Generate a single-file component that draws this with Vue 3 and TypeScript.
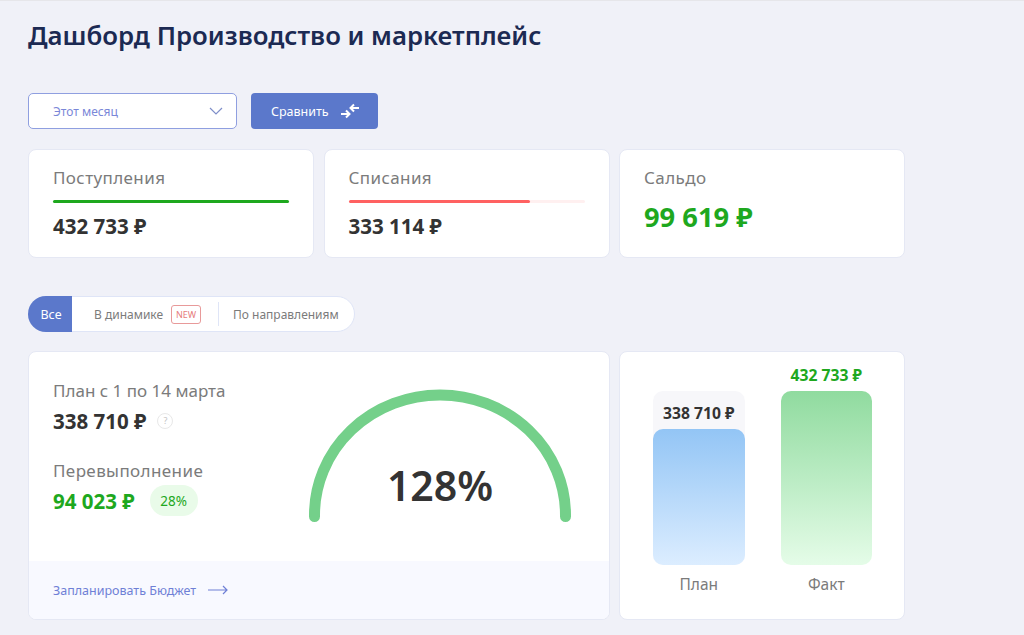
<script setup lang="ts">
const stats = [
  { label: 'Поступления', value: '432 733 ₽', fill: 100, kind: 'in' },
  { label: 'Списания', value: '333 114 ₽', fill: 77, kind: 'out' },
]
</script>

<template>
  <div class="page">
    <h1 class="title">Дашборд Производство и маркетплейс</h1>

    <div class="filters">
      <div class="select">
        <span>Этот месяц</span>
        <svg width="14" height="8" viewBox="0 0 14 8" fill="none">
          <path d="M1 1l6 6 6-6" stroke="#7f8fc9" stroke-width="1.2" />
        </svg>
      </div>
      <button class="compare">
        Сравнить
        <svg width="20" height="16" viewBox="0 0 20 16" fill="none" stroke="#fff" stroke-width="2">
          <path d="M1 11h8M6 7.500L9.500 11 6 14.500" />
          <path d="M19 5h-8M14 1.500L10.500 5 14 8.500" />
        </svg>
      </button>
    </div>

    <div class="grid">
      <div v-for="s in stats" :key="s.label" class="card stat">
        <div class="label wide">{{ s.label }}</div>
        <div class="track" :class="s.kind">
          <div class="fill" :style="{ width: s.fill + '%' }"></div>
        </div>
        <div class="value">{{ s.value }}</div>
      </div>
      <div class="card stat">
        <div class="label wide">Сальдо</div>
        <div class="saldo">99 619 ₽</div>
      </div>
    </div>

    <div class="tabs">
      <div class="tab active">Все</div>
      <div class="tab dyn">В динамике <span class="new">NEW</span></div>
      <div class="tab dir">По направлениям</div>
    </div>

    <div class="grid">
      <div class="card plan">
        <div class="plan-body">
          <div class="plan-text">
            <div class="label">План с 1 по 14 марта</div>
            <div class="value row">338 710 ₽ <span class="hint">?</span></div>
            <div class="label wide over">Перевыполнение</div>
            <div class="value row green">94 023 ₽ <span class="pill">28%</span></div>
          </div>
          <div class="gauge">
            <svg width="264" height="134" viewBox="0 0 264 134" fill="none">
              <path d="M6.500 127.500V126A125.500 120 0 0 1 257.500 126V127.500" stroke="#74d08a" stroke-width="11" stroke-linecap="round" />
            </svg>
            <div class="percent">128%</div>
          </div>
        </div>
        <div class="plan-foot">
          Запланировать Бюджет
          <svg width="20" height="10" viewBox="0 0 20 10" fill="none" stroke="#6f80d6" stroke-width="1.2">
            <path d="M0 5h19M15 1l4 4-4 4" />
          </svg>
        </div>
      </div>

      <div class="card bars">
        <div class="bar-col">
          <div class="bar-top"></div>
          <div class="bar-track">
            <div class="bar-value">338 710 ₽</div>
            <div class="bar blue"></div>
          </div>
          <div class="bar-name">План</div>
        </div>
        <div class="bar-col">
          <div class="bar-top green">432 733 ₽</div>
          <div class="bar greenbar"></div>
          <div class="bar-name">Факт</div>
        </div>
      </div>
    </div>
  </div>
</template>

<style scoped>
.page {
  box-sizing: border-box;
  width: 1024px;
  height: 635px;
  overflow: hidden;
  padding: 0 0 0 28px;
  background: #f0f1f8;
  border-top: 1px solid #e6e6ea;
  font-family: "Noto Sans", "Liberation Sans", sans-serif;
  color: #333;
}
.title {
  margin: 0;
  padding-top: 16px;
  height: 75px;
  box-sizing: border-box;
  font-size: 25.750px;
  line-height: 36px;
  font-weight: 600;
  color: #1c2a53;
}
.filters {
  display: flex;
  gap: 14px;
  margin-top: 17px;
  height: 36px;
}
.select {
  box-sizing: border-box;
  width: 209px;
  display: flex;
  align-items: center;
  justify-content: space-between;
  padding: 0 13px 0 24px;
  background: #fff;
  border: 1px solid #8f9fe0;
  border-radius: 5px;
  font-size: 12px;
  color: #7a87d8;
}
.compare {
  width: 127px;
  display: flex;
  align-items: center;
  gap: 11px;
  padding: 0 0 0 20px;
  border: 0;
  border-radius: 4px;
  background: #5b78cb;
  color: #fff;
  font: inherit;
  font-size: 12.500px;
}
.grid {
  display: grid;
  grid-template-columns: 286px 286px 286px;
  column-gap: 9.500px;
  margin-top: 20px;
}
.card {
  box-sizing: border-box;
  background: #fff;
  border: 1px solid #e5e8f4;
  border-radius: 8px;
}
.stat {
  height: 109px;
  padding: 16px 24px 0;
}
.label {
  font-size: 17px;
  line-height: 24px;
  color: #7b7b7b;
}
.wide {
  letter-spacing: 0.4px;
}
.track {
  height: 3px;
  margin-top: 10px;
  border-radius: 2px;
}
.track.in { background: #e9fbe9; }
.track.in .fill { background: #1ea81e; }
.track.out { background: #fff0f0; }
.track.out .fill { background: #ff6161; }
.fill {
  height: 100%;
  border-radius: 2px;
}
.value {
  margin-top: 11px;
  font-size: 20.500px;
  line-height: 24px;
  font-weight: 700;
  color: #333;
}
.saldo {
  margin-top: 10px;
  font-size: 27.300px;
  line-height: 34px;
  font-weight: 700;
  color: #1ea81e;
}
.tabs {
  box-sizing: border-box;
  align-items: center;
  width: 327px;
  height: 36px;
  margin-top: 38px;
  display: flex;
  background: #fff;
  border: 1px solid #dfe5f7;
  border-radius: 18px;
  font-size: 12px;
  color: #7b7b7b;
}
.tab {
  display: flex;
  align-items: center;
  height: 100%;
}
.active {
  flex: none;
  width: 44px;
  height: 36px;
  margin-left: -1px;
  padding-left: 2px;
  box-sizing: border-box;
  justify-content: center;
  background: #5b78cb;
  border-radius: 18px 0 0 18px;
  color: #fff;
  font-size: 12.500px;
}
.dyn {
  gap: 8px;
  padding-left: 22px;
  width: 146px;
  box-sizing: border-box;
}
.new {
  box-sizing: border-box;
  width: 30px;
  height: 19px;
  display: flex;
  align-items: center;
  justify-content: center;
  border: 1px solid #e89a9a;
  border-radius: 3px;
  font-size: 9px;
  color: #e67c7c;
}
.dir {
  height: 24px;
  padding-left: 14px;
  border-left: 1px solid #dfe5f7;
}
.grid:last-child {
  margin-top: 19px;
}
.plan {
  grid-column: span 2;
  height: 269px;
  display: flex;
  flex-direction: column;
  overflow: hidden;
}
.plan-body {
  flex: 1;
  display: flex;
  padding: 27px 24px 0;
}
.plan-text {
  width: 255px;
}
.plan-text .value {
  margin-top: 6px;
}
.row {
  display: flex;
  align-items: center;
  gap: 11px;
}
.over {
  margin-top: 26px;
}
.green {
  color: #1ea81e !important;
}
.hint {
  box-sizing: border-box;
  width: 16px;
  height: 16px;
  display: flex;
  align-items: center;
  justify-content: center;
  border: 1px solid #e8e8e8;
  border-radius: 50%;
  font-size: 9px;
  font-weight: 400;
  color: #c4c4c4;
}
.row .pill {
  margin: -4px 0 -3px 4px;
  width: 48px;
  height: 31px;
  display: flex;
  align-items: center;
  justify-content: center;
  background: #e9fbe9;
  border-radius: 16px;
  font-size: 13.500px;
  font-weight: 400;
}
.gauge {
  display: grid;
  justify-items: center;
  width: 264px;
  height: 134px;
  margin-top: 10px;
}
.gauge svg,
.percent {
  grid-area: 1 / 1;
}
.percent {
  margin-top: 69px;
  font-size: 41px;
  line-height: 54px;
  font-weight: 600;
  color: #333;
}
.plan-foot {
  height: 58px;
  display: flex;
  align-items: center;
  gap: 12px;
  padding-left: 24px;
  background: #f8f9ff;
  font-size: 12.500px;
  color: #6f80d6;
}
.bars {
  display: flex;
  gap: 36px;
  padding: 0 32px 0 33px;
}
.bar-col {
  width: 92px;
  display: flex;
  flex-direction: column;
  align-items: center;
}
.bar-top {
  height: 39px;
  padding-top: 12px;
  box-sizing: border-box;
  font-size: 15.700px;
  line-height: 22px;
  font-weight: 700;
  white-space: nowrap;
}
.bar-track {
  width: 100%;
  height: 174px;
  display: flex;
  flex-direction: column;
  background: #f7f7fa;
  border-radius: 10px;
}
.bar-value {
  height: 38px;
  line-height: 44px;
  text-align: center;
  font-size: 15.700px;
  font-weight: 700;
  white-space: nowrap;
}
.bar {
  width: 100%;
  border-radius: 10px;
}
.blue {
  flex: 1;
  background: linear-gradient(#93c5f5, #dcedff);
}
.greenbar {
  height: 174px;
  background: linear-gradient(#90db9f, #e5fce8);
}
.bar-name {
  margin-top: 7px;
  font-size: 15.500px;
  line-height: 24px;
  color: #7b7b7b;
}
</style>

<style>
html, body {
  background: #f0f1f8;
}
</style>
